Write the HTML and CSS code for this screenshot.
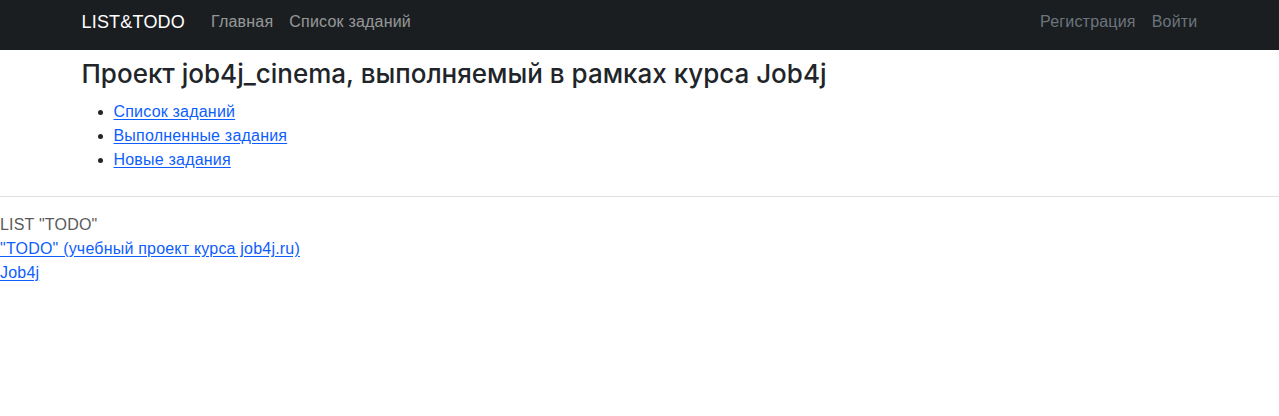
FILE: index.html
```html
<!DOCTYPE html>
<html lang="ru">
<head>
<meta charset="utf-8">
<title>LIST&amp;TODO</title>
<link rel="stylesheet" href="styles.css">
</head>
<body>
<nav class="navbar">
  <div class="container nav-inner">
    <div class="nav-left">
      <a class="brand" href="#">LIST&amp;TODO</a>
      <a class="nav-link" href="#">Главная</a>
      <a class="nav-link" href="#">Список заданий</a>
    </div>
    <div class="nav-right">
      <a class="nav-link muted" href="#">Регистрация</a>
      <a class="nav-link muted last" href="#">Войти</a>
    </div>
  </div>
</nav>
<main class="container main">
  <h3 class="title">Проект job4j_cinema, выполняемый в рамках курса Job4j</h3>
  <ul class="links">
    <li><a href="#">Список заданий</a></li>
    <li><a href="#">Выполненные задания</a></li>
    <li><a href="#">Новые задания</a></li>
  </ul>
</main>
<footer class="footer">
  <div class="footer-title">LIST "TODO"</div>
  <div><a href="#">"TODO" (учебный проект курса job4j.ru)</a></div>
  <div><a href="#">Job4j</a></div>
</footer>
</body>
</html>
```
FILE: styles.css
```css
* { box-sizing: border-box; }
html, body { margin: 0; padding: 0; }
body {
  font-family: "Liberation Sans", Arial, sans-serif;
  font-size: 16px;
  line-height: 24px;
  letter-spacing: 0.2px;
  color: #212529;
  background: #fff;
}
a { color: #0d5efd; text-underline-offset: 2px; }
.container {
  width: 1140px;
  margin: 0 auto;
  padding: 0 12px;
}
.navbar {
  background: #1b1e21;
  height: 50px;
}
.nav-inner {
  height: 50px;
  padding-bottom: 6px;
  display: flex;
  align-items: center;
  justify-content: space-between;
}
.nav-left, .nav-right { display: flex; align-items: center; }
.brand {
  color: #fff;
  font-size: 18px;
  text-decoration: none;
  margin-right: 18px;
}
.nav-link {
  color: rgba(255,255,255,0.55);
  text-decoration: none;
  padding: 0 8px;
}
.nav-link.muted { color: #6c757d; }
.nav-link.last { padding-right: 0; }
.main { padding-top: 7px; padding-bottom: 24px; }
.title {
  margin: 0 0 9px;
  font-family: Inter, "Liberation Sans", sans-serif;
  font-size: 26px;
  line-height: 34px;
  font-weight: 500;
  letter-spacing: 0;
}
.links {
  margin: 0;
  padding-left: 32px;
  line-height: 24px;
}
.footer {
  border-top: 1px solid #dee2e6;
  padding-top: 16px;
  line-height: 24px;
}
.footer-title { color: #5a5a5a; }
```
